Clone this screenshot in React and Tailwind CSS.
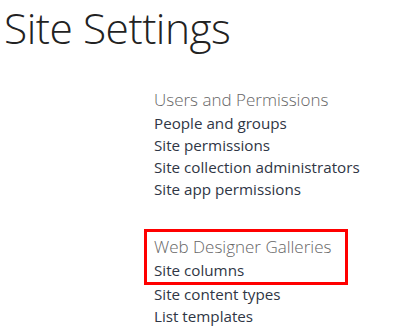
import React from "react";

const font = { fontFamily: '"Open Sans", "Noto Sans", sans-serif' };

const sections = [
  {
    title: "Users and Permissions",
    links: ["People and groups", "Site permissions", "Site collection administrators", "Site app permissions"],
  },
];

const SectionLink = ({ label }) => (
  <a href="#" className="block text-[15.2px] leading-[22px] text-[#2f3645]">
    {label}
  </a>
);

const App = () => {
  return (
    <div className="w-[415px] h-[329px] bg-white overflow-hidden" style={font}>
      <h1 className="pl-[4px] pt-[2px] text-[42.5px] leading-[52px] font-light text-[#222] tracking-[-0.5px]">
        Site Settings
      </h1>

      <div className="ml-[154px] mt-[34px]">
        {sections.map((s) => (
          <div key={s.title}>
            <h2 className="text-[17px] leading-[24px] font-light text-[#666]">{s.title}</h2>
            {s.links.map((l) => (
              <SectionLink key={l} label={l} />
            ))}
          </div>
        ))}

        <div className="mt-[29px]">
          <div className="ml-[-10px] w-[204px] border-[3px] border-[#f00] pl-[7px] pt-[3px] pb-[1px]">
            <h2 className="text-[17px] leading-[24px] font-light text-[#666]">Web Designer Galleries</h2>
            <SectionLink label="Site columns" />
          </div>
          <div className="-mt-[2px]">
            <SectionLink label="Site content types" />
            <SectionLink label="List templates" />
          </div>
        </div>
      </div>
    </div>
  );
};

export default App;
